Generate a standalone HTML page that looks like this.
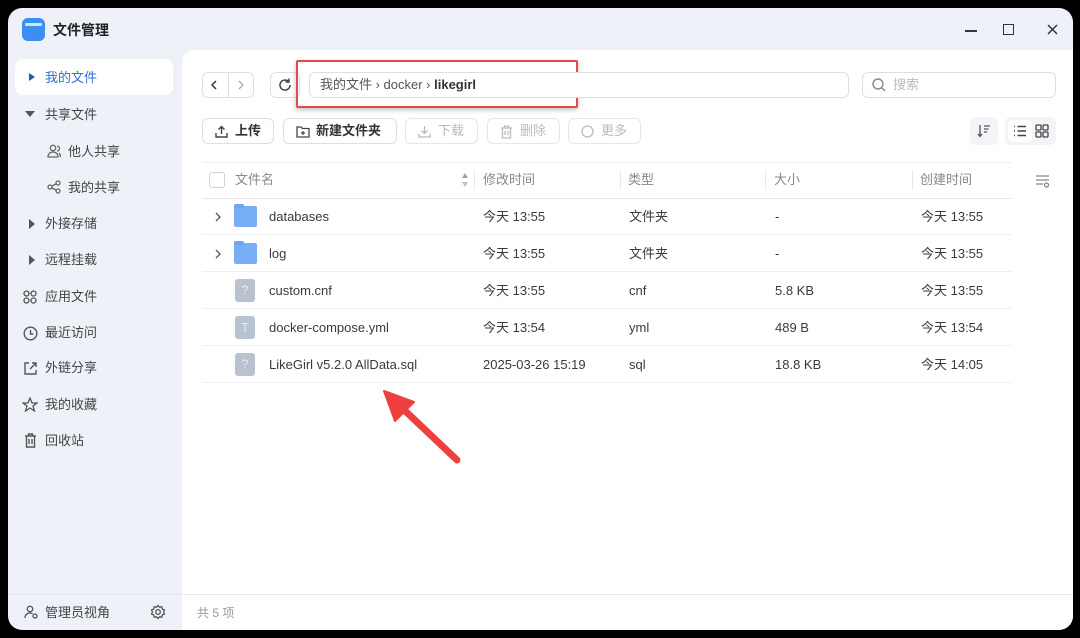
<!DOCTYPE html>
<html><head><meta charset="utf-8"><style>
*{margin:0;padding:0;box-sizing:border-box}
body{width:1080px;height:638px;background:#000;font-family:"Liberation Sans","Noto Sans CJK SC",sans-serif;position:relative;overflow:hidden;color:#3a3a3a}
.win{position:absolute;left:8px;top:8px;width:1065px;height:622px;background:#eef1f7;border-radius:14px;overflow:hidden}
.main{position:absolute;left:174px;top:42px;width:891px;height:544px;background:#fff;border-top-left-radius:12px}
.a{position:absolute}
.t{position:absolute;font-size:13px;white-space:nowrap;line-height:16px}
.btn{position:absolute;height:26px;border:1px solid #dcdfe6;border-radius:6px;background:#fff;font-size:13px;line-height:24px;color:#333;font-weight:bold}
.btn svg{position:absolute;left:12px;top:6px}
.btn span{position:absolute;left:32px}
.btn.d{color:#bbb;font-weight:normal;border-color:#e4e6eb}
.row{position:absolute;width:810px;height:37px;border-bottom:1px solid #eef0f3}
.side{position:absolute;font-size:13px;color:#444;white-space:nowrap;line-height:16px}
svg.i{position:absolute}
</style></head><body>
<div class="win">
 <div class="a" style="left:14px;top:10px;width:23px;height:23px;border-radius:6px;background:#3b8ff0"><div class="a" style="left:3px;top:5px;width:17px;height:3px;background:#cfe4fb;border-radius:1px"></div></div>
 <div class="t" style="left:45px;top:14px;font-size:14px;font-weight:bold;color:#222">文件管理</div>
 <div class="a" style="left:957px;top:22px;width:12px;height:1.5px;background:#333"></div>
 <div class="a" style="left:995px;top:16px;width:11px;height:11px;border:1.5px solid #333"></div>
 <svg class="i" style="left:1039px;top:16px" width="11" height="11"><path d="M1 1L10 10M10 1L1 10" stroke="#333" stroke-width="1.5"/></svg>

 <div class="a" style="left:7px;top:51px;width:158px;height:36px;background:#fff;border-radius:8px"></div>
 <svg class="i" style="left:20px;top:64px" width="8" height="10"><path d="M1 1L7 5L1 9Z" fill="#1a5fb4"/></svg>
 <div class="side" style="left:37px;top:62px;color:#2f6fd1">我的文件</div>
 <svg class="i" style="left:17px;top:103px" width="10" height="7"><path d="M0 0H10L5 6Z" fill="#555"/></svg>
 <div class="side" style="left:37px;top:99px">共享文件</div>
 <svg class="i" style="left:39px;top:136px" width="14" height="14" fill="none" stroke="#666" stroke-width="1.3"><circle cx="6" cy="4" r="2.7"/><path d="M1 13c0-3 2-5 5-5s5 2 5 5zM10 2a2.5 2.5 0 0 1 0 5M12 9c1 1 1.5 2.5 1.5 4"/></svg>
 <div class="side" style="left:60px;top:136px">他人共享</div>
 <svg class="i" style="left:39px;top:172px" width="14" height="14" fill="none" stroke="#666" stroke-width="1.3"><circle cx="3" cy="7" r="2"/><circle cx="11" cy="3" r="2"/><circle cx="11" cy="11" r="2"/><path d="M5 6L9 4M5 8L9 10"/></svg>
 <div class="side" style="left:60px;top:172px">我的共享</div>
 <svg class="i" style="left:21px;top:211px" width="7" height="10"><path d="M0 0L6 5L0 10Z" fill="#555"/></svg>
 <div class="side" style="left:37px;top:208px">外接存储</div>
 <svg class="i" style="left:21px;top:247px" width="7" height="10"><path d="M0 0L6 5L0 10Z" fill="#555"/></svg>
 <div class="side" style="left:37px;top:244px">远程挂载</div>
 <svg class="i" style="left:15px;top:282px" width="14" height="14" fill="none" stroke="#555" stroke-width="1.3"><circle cx="3.5" cy="3.5" r="2.5"/><circle cx="10.5" cy="3.5" r="2.5"/><circle cx="3.5" cy="10.5" r="2.5"/><circle cx="10.5" cy="10.5" r="2.5"/></svg>
 <div class="side" style="left:37px;top:281px">应用文件</div>
 <svg class="i" style="left:15px;top:318px" width="15" height="15" fill="none" stroke="#555" stroke-width="1.4"><circle cx="7.5" cy="7.5" r="6.3"/><path d="M7.5 4V8H10.5"/></svg>
 <div class="side" style="left:37px;top:317px">最近访问</div>
 <svg class="i" style="left:15px;top:353px" width="15" height="15" fill="none" stroke="#555" stroke-width="1.4"><path d="M6 2H2V13H13V9M7 8L13 2M9 2H13V6"/></svg>
 <div class="side" style="left:37px;top:352px">外链分享</div>
 <svg class="i" style="left:14px;top:389px" width="16" height="15" fill="none" stroke="#555" stroke-width="1.3"><path d="M8 1L10 6H15L11 9L12.5 14L8 11L3.5 14L5 9L1 6H6Z"/></svg>
 <div class="side" style="left:37px;top:389px">我的收藏</div>
 <svg class="i" style="left:16px;top:425px" width="13" height="15" fill="none" stroke="#555" stroke-width="1.4"><path d="M1 3H12M4.5 3V1H8.5V3M2.5 3V14H10.5V3M5 6V11M8 6V11"/></svg>
 <div class="side" style="left:37px;top:425px">回收站</div>

 <div class="a" style="left:0;top:586px;width:1065px;height:1px;background:#e6e8ec"></div>
 <div class="a" style="left:174px;top:587px;width:891px;height:35px;background:#fff"></div>
 <svg class="i" style="left:16px;top:597px" width="14" height="14" fill="none" stroke="#555" stroke-width="1.3"><circle cx="6" cy="4" r="2.7"/><path d="M1 13c0-3 2-5 5-5 1 0 2 .3 2.5.8"/><circle cx="11" cy="11" r="2"/></svg>
 <div class="side" style="left:37px;top:597px">管理员视角</div>
 <svg class="i" style="left:142px;top:596px" width="16" height="16" fill="none" stroke="#555" stroke-width="1.3"><circle cx="8" cy="8" r="2.3"/><path d="M8 1.5L9.5 3.2L11.8 2.8L12.3 5.1L14.5 6L13.5 8L14.5 10L12.3 10.9L11.8 13.2L9.5 12.8L8 14.5L6.5 12.8L4.2 13.2L3.7 10.9L1.5 10L2.5 8L1.5 6L3.7 5.1L4.2 2.8L6.5 3.2Z"/></svg>
 <div class="side" style="left:189px;top:597px;font-size:12px;color:#999">共 5 项</div>

 <div class="main"></div>
</div>

<!-- toolbar -->
<div class="a" style="left:202px;top:72px;width:52px;height:26px;border:1px solid #dcdfe6;border-radius:6px"></div>
<div class="a" style="left:228px;top:72px;width:1px;height:26px;background:#dcdfe6"></div>
<svg class="i" style="left:211px;top:80px" width="6" height="10"><path d="M5 1L1 5L5 9" fill="none" stroke="#333" stroke-width="1.5"/></svg>
<svg class="i" style="left:238px;top:80px" width="6" height="10"><path d="M1 1L5 5L1 9" fill="none" stroke="#aaa" stroke-width="1.3"/></svg>
<div class="a" style="left:270px;top:72px;width:30px;height:26px;border:1px solid #dcdfe6;border-radius:6px"></div>
<svg class="i" style="left:277px;top:77px" width="16" height="16" fill="none" stroke="#444" stroke-width="1.5"><path d="M13 8A5 5 0 1 1 11.5 4.5"/><path d="M12 1.5V5H8.5"/></svg>
<div class="a" style="left:296px;top:60px;width:282px;height:48px;border:2.5px solid #e14b4b;border-radius:2px;box-shadow:0 2px 5px rgba(0,0,0,.25)"></div>
<div class="a" style="left:309px;top:72px;width:540px;height:26px;border:1px solid #dcdfe6;border-radius:6px;background:#fff"></div>
<div class="t" style="left:320px;top:77px;color:#555">我的文件 › docker › <b style="color:#333">likegirl</b></div>
<div class="a" style="left:862px;top:72px;width:194px;height:26px;border:1px solid #dcdfe6;border-radius:6px"></div>
<svg class="i" style="left:871px;top:77px" width="16" height="16" fill="none" stroke="#888" stroke-width="1.4"><circle cx="7" cy="7" r="5"/><path d="M11 11L14 14"/></svg>
<div class="t" style="left:893px;top:77px;color:#bbb">搜索</div>

<div class="btn" style="left:202px;top:118px;width:72px"><svg width="13" height="13" fill="none" stroke="#444" stroke-width="1.4"><path d="M6.5 9V1.5M3.5 4.5L6.5 1.5L9.5 4.5M1 8V12H12V8"/></svg><span>上传</span></div>
<div class="btn" style="left:283px;top:118px;width:114px"><svg width="14" height="13" fill="none" stroke="#444" stroke-width="1.3"><path d="M1 2H5L6.5 3.5H13V12H1Z M7 6V10M5 8H9"/></svg><span>新建文件夹</span></div>
<div class="btn d" style="left:405px;top:118px;width:73px"><svg width="13" height="13" fill="none" stroke="#bbb" stroke-width="1.3"><path d="M6.5 1V8.5M3.5 5.5L6.5 8.5L9.5 5.5M1 9V12H12V9"/></svg><span>下载</span></div>
<div class="btn d" style="left:487px;top:118px;width:73px"><svg width="13" height="14" fill="none" stroke="#bbb" stroke-width="1.3"><path d="M1 3H12M4.5 3V1H8.5V3M2.5 3V13H10.5V3M5 6V10M8 6V10"/></svg><span>删除</span></div>
<div class="btn d" style="left:568px;top:118px;width:73px"><svg width="13" height="13" fill="none" stroke="#bbb" stroke-width="1.3"><circle cx="6.5" cy="6.5" r="5.5"/></svg><span>更多</span></div>
<div class="a" style="left:970px;top:117px;width:28px;height:28px;background:#f2f4f7;border-radius:6px"></div>
<svg class="i" style="left:977px;top:124px" width="14" height="14" fill="none" stroke="#555" stroke-width="1.3"><path d="M3 1V12M1 10L3 12.5L5 10M7 2H13M7 5H11.5M7 8H10"/></svg>
<div class="a" style="left:1005px;top:117px;width:51px;height:28px;background:#f2f4f7;border-radius:6px"></div>
<div class="a" style="left:1008px;top:120px;width:24px;height:22px;background:#fff;border-radius:5px"></div>
<svg class="i" style="left:1013px;top:125px" width="14" height="12" fill="none" stroke="#444" stroke-width="1.4"><path d="M1 1.5H2M1 6H2M1 10.5H2M4.5 1.5H13M4.5 6H13M4.5 10.5H13"/></svg>
<svg class="i" style="left:1035px;top:124px" width="14" height="14" fill="none" stroke="#444" stroke-width="1.3"><rect x="1" y="1" width="5" height="5" rx="1"/><rect x="8" y="1" width="5" height="5" rx="1"/><rect x="1" y="8" width="5" height="5" rx="1"/><rect x="8" y="8" width="5" height="5" rx="1"/></svg>

<!-- table header -->
<div class="a" style="left:202px;top:162px;width:810px;height:1px;background:#eceef2"></div>
<div class="a" style="left:202px;top:198px;width:810px;height:1px;background:#e6e8ec"></div>
<div class="a" style="left:209px;top:172px;width:16px;height:16px;border:1px solid #d0d3d9;border-radius:3px"></div>
<div class="t" style="left:235px;top:172px;color:#888">文件名</div>
<svg class="i" style="left:461px;top:172px" width="8" height="16"><path d="M1 6L4 1L7 6Z" fill="#99a3b5"/><path d="M1 10L4 15L7 10Z" fill="#bcc3cf"/></svg>
<div class="a" style="left:474px;top:170px;width:1px;height:20px;background:#e6e8ec"></div>
<div class="t" style="left:483px;top:172px;color:#888">修改时间</div>
<div class="a" style="left:620px;top:170px;width:1px;height:20px;background:#e6e8ec"></div>
<div class="t" style="left:628px;top:172px;color:#888">类型</div>
<div class="a" style="left:765px;top:170px;width:1px;height:20px;background:#e6e8ec"></div>
<div class="t" style="left:774px;top:172px;color:#888">大小</div>
<div class="a" style="left:912px;top:170px;width:1px;height:20px;background:#e6e8ec"></div>
<div class="t" style="left:920px;top:172px;color:#888">创建时间</div>
<svg class="i" style="left:1035px;top:174px" width="16" height="14" fill="none" stroke="#888" stroke-width="1.3"><path d="M1 2H14M1 6H14M1 10H8"/><circle cx="11.5" cy="11" r="2"/></svg>

<!-- rows -->
<div class="row" style="left:202px;top:198px"></div>
<div class="row" style="left:202px;top:235px"></div>
<div class="row" style="left:202px;top:272px"></div>
<div class="row" style="left:202px;top:309px"></div>
<div class="row" style="left:202px;top:346px"></div>

<svg class="i" style="left:215px;top:212px" width="6" height="10"><path d="M1 1L5 5L1 9" fill="none" stroke="#555" stroke-width="1.3"/></svg>
<div class="a" style="left:234px;top:206px;width:23px;height:21px;background:#78aef5;border-radius:2px"></div><div class="a" style="left:234px;top:204px;width:10px;height:4px;background:#6fa6f2;border-radius:2px 2px 0 0"></div>
<svg class="i" style="left:215px;top:249px" width="6" height="10"><path d="M1 1L5 5L1 9" fill="none" stroke="#555" stroke-width="1.3"/></svg>
<div class="a" style="left:234px;top:243px;width:23px;height:21px;background:#78aef5;border-radius:2px"></div><div class="a" style="left:234px;top:241px;width:10px;height:4px;background:#6fa6f2;border-radius:2px 2px 0 0"></div>
<div class="a" style="left:235px;top:279px;width:20px;height:23px;background:#b9c2cf;border-radius:3px;color:#e8ecf2;font-size:12px;text-align:center;line-height:23px">?</div>
<div class="a" style="left:235px;top:316px;width:20px;height:23px;background:#b9c2cf;border-radius:3px;color:#e8ecf2;font-size:13px;text-align:center;line-height:23px">T</div>
<div class="a" style="left:235px;top:353px;width:20px;height:23px;background:#b9c2cf;border-radius:3px;color:#e8ecf2;font-size:12px;text-align:center;line-height:23px">?</div>

<div class="t" style="left:269px;top:209px">databases</div>
<div class="t" style="left:269px;top:246px">log</div>
<div class="t" style="left:269px;top:283px">custom.cnf</div>
<div class="t" style="left:269px;top:320px">docker-compose.yml</div>
<div class="t" style="left:269px;top:357px">LikeGirl v5.2.0 AllData.sql</div>

<div class="t" style="left:483px;top:209px">今天 13:55</div>
<div class="t" style="left:483px;top:246px">今天 13:55</div>
<div class="t" style="left:483px;top:283px">今天 13:55</div>
<div class="t" style="left:483px;top:320px">今天 13:54</div>
<div class="t" style="left:483px;top:357px">2025-03-26 15:19</div>

<div class="t" style="left:629px;top:209px">文件夹</div>
<div class="t" style="left:629px;top:246px">文件夹</div>
<div class="t" style="left:629px;top:283px">cnf</div>
<div class="t" style="left:629px;top:320px">yml</div>
<div class="t" style="left:629px;top:357px">sql</div>

<div class="t" style="left:775px;top:209px">-</div>
<div class="t" style="left:775px;top:246px">-</div>
<div class="t" style="left:775px;top:283px">5.8 KB</div>
<div class="t" style="left:775px;top:320px">489 B</div>
<div class="t" style="left:775px;top:357px">18.8 KB</div>

<div class="t" style="left:921px;top:209px">今天 13:55</div>
<div class="t" style="left:921px;top:246px">今天 13:55</div>
<div class="t" style="left:921px;top:283px">今天 13:55</div>
<div class="t" style="left:921px;top:320px">今天 13:54</div>
<div class="t" style="left:921px;top:357px">今天 14:05</div>

<svg class="a" style="left:0;top:0" width="1080" height="638">
 <line x1="457" y1="460" x2="400" y2="406" stroke="#ef4040" stroke-width="7" stroke-linecap="round"/>
 <polygon points="384,391 414,402 395,421" fill="#ef4040" stroke="#ef4040" stroke-width="2" stroke-linejoin="round"/>
</svg>
</body></html>
